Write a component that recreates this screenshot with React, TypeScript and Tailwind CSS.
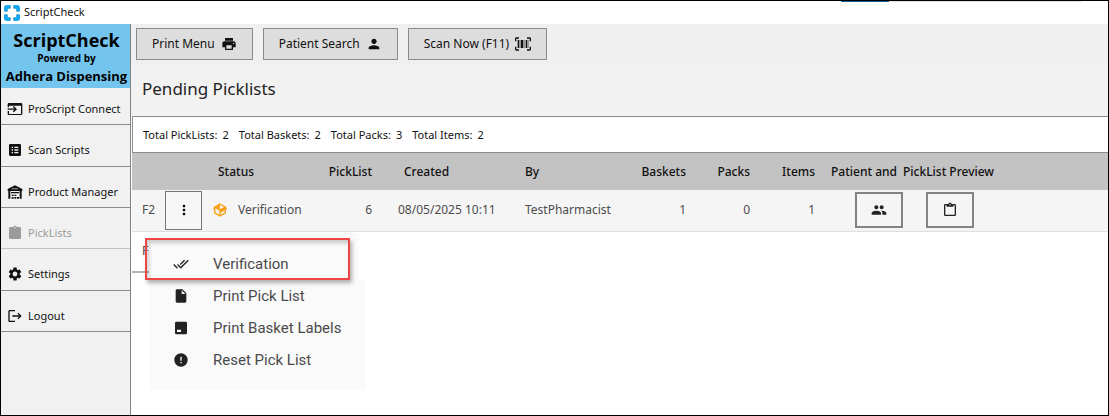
import type { ReactNode } from "react";
import {
  MdDoneAll,
  MdError,
  MdGroup,
  MdInsertDriveFile,
  MdLogout,
  MdMoreVert,
  MdPerson,
  MdSettings,
} from "react-icons/md";

type IconProps = { className?: string };

function Glyph({ d, className }: IconProps & { d: string }) {
  return (
    <svg viewBox="0 0 24 24" fill="currentColor" fillRule="evenodd" className={className} aria-hidden="true">
      <path d={d} />
    </svg>
  );
}

const CLIPBOARD =
  "M19,3H14.82C14.4,1.84 13.3,1 12,1C10.7,1 9.6,1.84 9.18,3H5A2,2 0 0,0 3,5V19A2,2 0 0,0 5,21H19A2,2 0 0,0 21,19V5A2,2 0 0,0 19,3M12,3A1,1 0 0,1 13,4A1,1 0 0,1 12,5A1,1 0 0,1 11,4A1,1 0 0,1 12,3";
const CLIPBOARD_OUTLINE = CLIPBOARD + "M7,7H17V5H19V19H5V5H7V7Z";
const LIST_BOX =
  "M5,3H19A2,2 0 0,1 21,5V19A2,2 0 0,1 19,21H5A2,2 0 0,1 3,19V5A2,2 0 0,1 5,3M7,7V9H9V7H7M11,7V9H17V7H11M7,11V13H9V11H7M11,11V13H17V11H11M7,15V17H9V15H7M11,15V17H17V15H11Z";
const WINDOW_ENTER =
  "M3,3H21A2,2 0 0,1 23,5V19A2,2 0 0,1 21,21H3A2,2 0 0,1 1,19V15H3V19.500H21V7H3V9.500H1V5A2,2 0 0,1 3,3M1,11.200H11L8.700,8.900L10.200,7.400L15,12.200L10.200,17L8.700,15.500L11,13.200H1V11.200Z";
const WAREHOUSE =
  "M12,2L23,7.500V10.500H1V7.500L12,2M8,6.500V8H10V6.500H8M11,6.500V8H13V6.500H11M14,6.500V8H16V6.500H14M2,10.500H5V22H2V10.500M19,10.500H22V22H19V10.500M6,12H18V14H6V12M7,16H10V18H7V16M11,16H14V18H11V16M7,19.500H10V22H7V19.500M11,19.500H14V22H11V19.500M15,19.500H18V22H15V19.500Z";
const PRINTER =
  "M18,3H6V7H18V3M19,12A1,1 0 0,1 18,11A1,1 0 0,1 19,10A1,1 0 0,1 20,11A1,1 0 0,1 19,12M16,19H8V14H16V19M19,8H5A3,3 0 0,0 2,11V17H6V21H18V17H22V11A3,3 0 0,0 19,8Z";
const BARCODE_SCAN =
  "M4,6H6V18H4V6M7,6H8V18H7V6M9,6H12V18H9V6M13,6H14V18H13V6M16,6H18V18H16V6M19,6H20V18H19V6M2,4V8H0V4A2,2 0 0,1 2,2H6V4H2M22,2A2,2 0 0,1 24,4V8H22V4H18V2H22M2,16V20H6V22H2A2,2 0 0,1 0,20V16H2M22,20V16H24V20A2,2 0 0,1 22,22H18V20H22Z";
const LABEL_BOX =
  "M5,2.500H19A2,2 0 0,1 21,4.500V19.500A2,2 0 0,1 19,21.500H5A2,2 0 0,1 3,19.500V4.500A2,2 0 0,1 5,2.500M6,14.500V18H12V14.500H6Z";
const PACKAGE =
  "M2,10.960C1.500,10.680 1.350,10.070 1.630,9.590L3.130,7C3.240,6.800 3.410,6.660 3.600,6.580L11.430,2.180C11.590,2.060 11.790,2 12,2C12.210,2 12.410,2.060 12.570,2.180L20.470,6.620C20.660,6.720 20.820,6.880 20.910,7.080L22.360,9.600C22.640,10.080 22.470,10.690 22,10.960L21,11.540V16.500C21,16.880 20.790,17.210 20.470,17.380L12.570,21.820C12.410,21.940 12.210,22 12,22C11.790,22 11.590,21.940 11.430,21.820L3.530,17.380C3.210,17.210 3,16.880 3,16.500V10.960C2.700,11.130 2.320,11.140 2,10.960M12,4.150V10.850L17.960,7.500L12,4.150M5,15.910L11,19.290V12.580L5,9.210V15.910M19,15.910V12.690L14,15.590C13.670,15.770 13.300,15.760 13,15.600V19.290L19,15.910Z";

function AppMark() {
  return (
    <svg viewBox="0 0 18 18" className="size-[18px]" aria-hidden="true">
      <path
        d="M1 7.500V4A3 3 0 0 1 4 1H7.500V4L5 5L4 7.500Z M10.500 1H14A3 3 0 0 1 17 4V7.500H14L13 5L10.500 4Z M17 10.500V14A3 3 0 0 1 14 17H10.500V14L13 13L14 10.500Z M7.500 17H4A3 3 0 0 1 1 14V10.500H4L5 13L7.500 14Z"
        fill="#12a9f0"
      />
      <path
        d="M7.500 2V4.500H6Z M10.500 2V4.500H12Z M7.500 16V13.500H6Z M10.500 16V13.500H12Z M2 7.500H4.500V6Z M16 7.500H13.500V6Z M2 10.500H4.500V12Z M16 10.500H13.500V12Z"
        fill="#1b6f96"
      />
    </svg>
  );
}

function NavItem({ icon, label, disabled = false }: { icon: ReactNode; label: string; disabled?: boolean }) {
  return (
    <li className={disabled ? "border-b border-[#c4c4c4]" : "border-b border-[#8c8c8c]"}>
      <button
        type="button"
        disabled={disabled}
        className="flex size-full items-center gap-[5px] pt-[10px] pl-[6px] text-left disabled:text-[#9b9b9b]"
      >
        {icon}
        {label}
      </button>
    </li>
  );
}

function ToolButton({ label, icon }: { label: string; icon: ReactNode }) {
  return (
    <button
      type="button"
      className="flex h-8 items-center gap-[6px] border border-[#8a8a8a] bg-[#dddddd] px-[15px]"
    >
      {label}
      {icon}
    </button>
  );
}

function MenuItem({ icon, label }: { icon: ReactNode; label: string }) {
  return (
    <button
      type="button"
      role="menuitem"
      className="flex h-8 w-full items-center gap-6 pl-6 text-left font-['Roboto',sans-serif] text-[15px] text-[#4a4a4a]"
    >
      <span className="text-[#222]">{icon}</span>
      {label}
    </button>
  );
}

function RowMenu() {
  return (
    <div role="menu" className="absolute top-[42px] -left-4 z-10 w-[216px]">
      <div className="relative w-[210px] bg-[#fafafa] pt-[15px]">
        <MenuItem icon={<MdDoneAll className="size-4" />} label="Verification" />
        <div className="pointer-events-none absolute top-[5px] -left-1 h-[42px] w-[205px] border-2 border-[#f04545] shadow-[2px_3px_4px_rgba(0,0,0,0.3),inset_2px_3px_4px_rgba(0,0,0,0.2)]" />
      </div>
      <div className="mr-[6px] h-[13px] bg-[#fafafa]" />
      <div className="bg-[#fafafa] pb-[14px]">
        <div className="-mt-[13px]">
          <MenuItem icon={<MdInsertDriveFile className="size-4" />} label="Print Pick List" />
        </div>
        <MenuItem icon={<Glyph d={LABEL_BOX} className="size-4" />} label="Print Basket Labels" />
        <MenuItem icon={<MdError className="size-4" />} label="Reset Pick List" />
      </div>
    </div>
  );
}

const SUMMARY = [
  { label: "Total PickLists:", value: 2 },
  { label: "Total Baskets:", value: 2 },
  { label: "Total Packs:", value: 3 },
  { label: "Total Items:", value: 2 },
];

export default function App() {
  return (
    <div className="flex min-h-screen flex-col border border-black bg-white font-['Noto_Sans',sans-serif] text-[12px] text-[#111]">
      <header className="relative flex h-[23px] items-center gap-[3px] pl-[2px]">
        <AppMark />
        <span className="text-[11px]">ScriptCheck</span>
        <div className="absolute top-0 right-[26px] flex h-px w-[241px] bg-[#e4e0e0]">
          <div className="w-12 bg-[#17619c]" />
        </div>
      </header>

      <div className="flex flex-1">
        <aside className="w-[130px] shrink-0 border-r border-[#828282] bg-[#f1f1f1]">
          <div className="flex h-16 flex-col items-center bg-[#74c5ee] pt-[6px] pl-[2px] font-['Open_Sans',sans-serif] font-bold whitespace-nowrap text-black">
            <div className="text-[18px] leading-5">ScriptCheck</div>
            <div className="text-[10px] leading-4">Powered by</div>
            <div className="text-[13px] leading-5">Adhera Dispensing</div>
          </div>
          <nav className="-mt-1 text-[11px]">
            <ul className="grid h-[248px] auto-rows-fr">
              <NavItem icon={<Glyph d={WINDOW_ENTER} className="size-4" />} label="ProScript Connect" />
              <NavItem icon={<Glyph d={LIST_BOX} className="size-4" />} label="Scan Scripts" />
              <NavItem icon={<Glyph d={WAREHOUSE} className="size-4" />} label="Product Manager" />
              <NavItem icon={<Glyph d={CLIPBOARD} className="size-4" />} label="PickLists" disabled />
              <NavItem icon={<MdSettings className="size-4" />} label="Settings" />
              <NavItem icon={<MdLogout className="size-4" />} label="Logout" />
            </ul>
          </nav>
        </aside>

        <main className="min-w-0 flex-1">
          <div className="flex h-[42px] gap-[10px] bg-[#f0f0f0] pt-1 pl-[5px]">
            <ToolButton label="Print Menu" icon={<Glyph d={PRINTER} className="size-4" />} />
            <ToolButton label="Patient Search" icon={<MdPerson className="size-4" />} />
            <ToolButton label="Scan Now (F11)" icon={<Glyph d={BARCODE_SCAN} className="size-4" />} />
          </div>
          <h1 className="flex h-[50px] items-center bg-[#f2f2f2] pb-1 pl-[11px] text-[17px] text-[#222]">
            Pending Picklists
          </h1>
          <div className="ml-px flex h-[37px] items-center gap-[10px] border border-[#8c8c8c] border-r-0 pt-px pl-[10px] text-[11px]">
            {SUMMARY.map(({ label, value }) => (
              <span key={label} className="flex gap-[5px]">
                <span>{label}</span>
                <span>{value}</span>
              </span>
            ))}
          </div>

          <table className="ml-px w-[calc(100%-1px)] table-fixed text-left whitespace-nowrap">
            <colgroup>
              <col className="w-[33px]" />
              <col className="w-[43px]" />
              <col className="w-[110px]" />
              <col className="w-[54px]" />
              <col className="w-[153px]" />
              <col className="w-[95px]" />
              <col className="w-[66px]" />
              <col className="w-16" />
              <col className="w-[65px]" />
              <col className="w-[88px]" />
              <col className="w-[93px]" />
              <col />
            </colgroup>
            <thead>
              <tr className="h-[37px] bg-[#c3c3c3] [&>th]:p-0 [&>th]:font-medium">
                <th />
                <th />
                <th>
                  <span className="pl-[10px]">Status</span>
                </th>
                <th className="text-right">PickList</th>
                <th>
                  <span className="pl-8">Created</span>
                </th>
                <th>By</th>
                <th className="text-right">Baskets</th>
                <th className="text-right">Packs</th>
                <th className="text-right">Items</th>
                <th>
                  <span className="pl-4">Patient and</span>
                </th>
                <th>PickList Preview</th>
                <th />
              </tr>
            </thead>
            <tbody className="text-[#4c4c4c]">
              <tr className="h-[41px] border-b border-[#dedede] bg-[#f5f5f5] [&>td]:p-0">
                <td>
                  <span className="pl-[10px]">F2</span>
                </td>
                <td>
                  <div className="relative">
                    <button
                      type="button"
                      aria-label="Row actions"
                      className="flex h-[39px] w-[37px] items-center justify-center border border-[#777] bg-[#f7f7f7] text-black"
                    >
                      <MdMoreVert className="size-4" />
                    </button>
                    <RowMenu />
                  </div>
                </td>
                <td>
                  <div className="flex items-center gap-[10px] pl-1">
                    <Glyph d={PACKAGE} className="size-4 text-[#f9a11b]" />
                    Verification
                  </div>
                </td>
                <td className="text-right">6</td>
                <td>
                  <span className="pl-[26px]">08/05/2025 10:11</span>
                </td>
                <td>TestPharmacist</td>
                <td className="text-right">1</td>
                <td className="text-right">0</td>
                <td className="text-right">1</td>
                <td>
                  <div className="pl-10">
                    <button
                      type="button"
                      aria-label="Patient"
                      className="flex h-9 w-12 items-center justify-center border-2 border-[#838383] text-[#222]"
                    >
                      <MdGroup className="size-4" />
                    </button>
                  </div>
                </td>
                <td>
                  <div className="pl-[23px]">
                    <button
                      type="button"
                      aria-label="PickList preview"
                      className="flex h-9 w-12 items-center justify-center border-2 border-[#838383] text-[#222]"
                    >
                      <Glyph d={CLIPBOARD_OUTLINE} className="size-4" />
                    </button>
                  </div>
                </td>
                <td />
              </tr>
              <tr className="h-[41px]">
                <td className="border-b-2 border-[#b5b5b5] p-0">
                  <span className="pl-[10px]">F3</span>
                </td>
              </tr>
            </tbody>
          </table>
        </main>
      </div>
    </div>
  );
}
